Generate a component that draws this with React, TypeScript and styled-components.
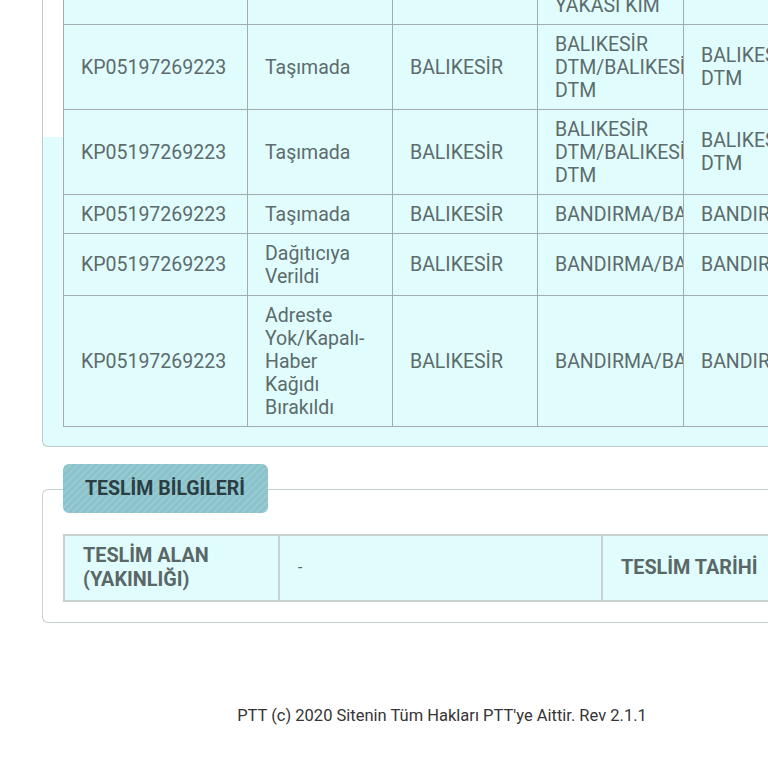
import React from "react";
import styled, { createGlobalStyle } from "styled-components";

const Global = createGlobalStyle`
  html, body { margin: 0; padding: 0; background: #ffffff; }
  body { width: 768px; height: 768px; overflow: hidden; font-family: Roboto, "Noto Sans", Arial, sans-serif; }
`;

const Page = styled.div`
  width: 884px;
  padding: 0 0 0 42px;
  box-sizing: border-box;
  display: flex;
  flex-direction: column;
`;

const MovementsPanel = styled.section`
  margin-top: -61px;
  width: 820px;
  box-sizing: border-box;
  border-left: 1.5px solid #c3cccc;
  border-bottom: 1.5px solid #c3cccc;
  border-bottom-left-radius: 6px;
  background: linear-gradient(#ffffff 0 198px, #e1fcfc 198px);
  padding: 0 0 19px 20px;
`;

const Grid = styled.table`
  border-collapse: collapse;
  table-layout: fixed;
  width: 786px;
  background: #e1fcfc;
  color: #5c6b6c;
  font-size: 19.5px;
  line-height: 23px;
`;

const Col = styled.col<{ $w: number }>`
  width: ${(p) => p.$w}px;
`;

const Cell = styled.td`
  border: 1px solid #a2acac;
  padding: 7.5px 17px;
  vertical-align: middle;
  overflow: hidden;
  white-space: normal;
`;

const DeliverySection = styled.section`
  margin-top: 42px;
  width: 820px;
  box-sizing: border-box;
  border: 1.5px solid #c9d0d0;
  border-right: none;
  border-radius: 6px 0 0 6px;
  padding: 0 0 20px 20px;
  display: flex;
  flex-direction: column;
  align-items: flex-start;
`;

const Legend = styled.div`
  margin-top: -26px;
  height: 49px;
  width: 205px;
  box-sizing: border-box;
  padding-left: 22px;
  display: flex;
  align-items: center;
  border-radius: 6px;
  background-color: #8ac3cb;
  background-image: repeating-linear-gradient(
    135deg,
    rgba(255, 255, 255, 0.12) 0 2px,
    rgba(255, 255, 255, 0) 2px 5px
  );
  color: #2b3d42;
  font-weight: 700;
  font-size: 19.5px;
`;

const InfoTable = styled.table`
  margin-top: 21px;
  border-collapse: collapse;
  table-layout: fixed;
  width: 780px;
  background: #e1fcfc;
  border: 2px solid #c8d0d0;
`;

const InfoCell = styled.td<{ $bold?: boolean }>`
  border: 2px solid #c8d0d0;
  padding: 8px 18px;
  vertical-align: middle;
  font-size: ${(p) => (p.$bold ? "19.8px" : "16px")};
  font-weight: ${(p) => (p.$bold ? 700 : 400)};
  line-height: 24px;
  color: #5a6767;
`;

const Footer = styled.footer`
  margin-top: 83px;
  text-align: center;
  width: 800px;
  font-size: 16.5px;
  color: #353535;
`;

type Row = [string, string, string, string, string];

const rows: Row[] = [
  ["KP05197269223", "Kabul Edildi", "BALIKESİR", "BALIKESİR ANADOLU YAKASI KİM", "BALIKESİR"],
  ["KP05197269223", "Taşımada", "BALIKESİR", "BALIKESİR DTM/BALIKESİR DTM", "BALIKESİR DTM"],
  ["KP05197269223", "Taşımada", "BALIKESİR", "BALIKESİR DTM/BALIKESİR DTM", "BALIKESİR DTM"],
  ["KP05197269223", "Taşımada", "BALIKESİR", "BANDIRMA/BALIKESİR", "BANDIRMA"],
  ["KP05197269223", "Dağıtıcıya Verildi", "BALIKESİR", "BANDIRMA/BALIKESİR", "BANDIRMA"],
  ["KP05197269223", "Adreste Yok/Kapalı-Haber Kağıdı Bırakıldı", "BALIKESİR", "BANDIRMA/BALIKESİR", "BANDIRMA"],
];

export default function App() {
  return (
    <>
      <Global />
      <Page>
        <MovementsPanel>
          <Grid>
            <colgroup>
              <Col $w={184} />
              <Col $w={145} />
              <Col $w={145} />
              <Col $w={146} />
              <Col $w={166} />
            </colgroup>
            <tbody>
              {rows.map((r, i) => (
                <tr key={i}>
                  {r.map((c, j) => (
                    <Cell key={j}>{c}</Cell>
                  ))}
                </tr>
              ))}
            </tbody>
          </Grid>
        </MovementsPanel>

        <DeliverySection>
          <Legend>TESLİM BİLGİLERİ</Legend>
          <InfoTable>
            <colgroup>
              <Col $w={215} />
              <Col $w={323} />
              <Col $w={242} />
            </colgroup>
            <tbody>
              <tr>
                <InfoCell $bold>TESLİM ALAN (YAKINLIĞI)</InfoCell>
                <InfoCell>-</InfoCell>
                <InfoCell $bold>TESLİM TARİHİ</InfoCell>
              </tr>
            </tbody>
          </InfoTable>
        </DeliverySection>

        <Footer>PTT (c) 2020 Sitenin Tüm Hakları PTT'ye Aittir. Rev 2.1.1</Footer>
      </Page>
    </>
  );
}
